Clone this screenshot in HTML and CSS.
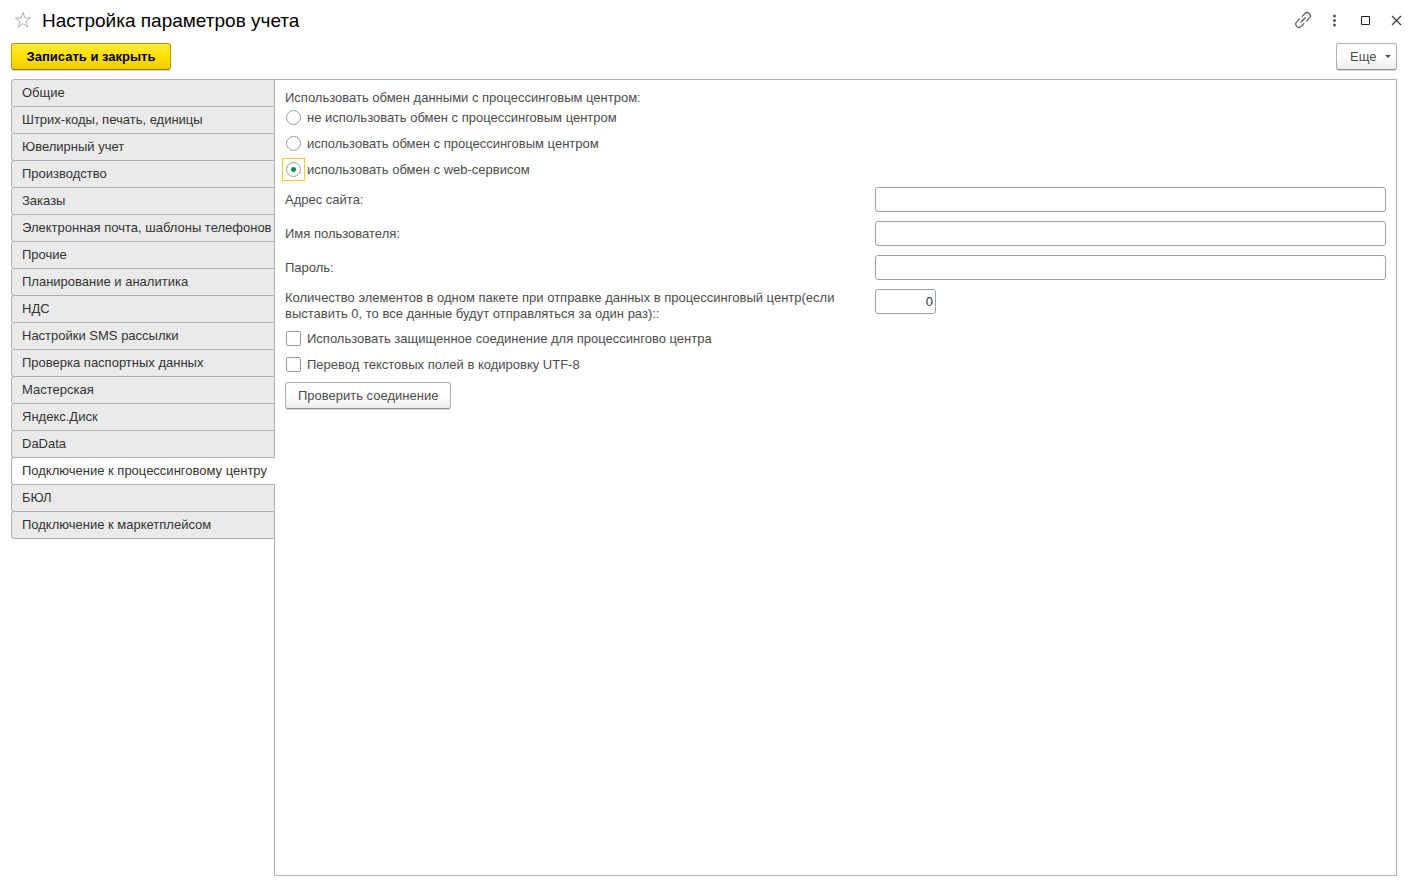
FILE: index.html
```html
<!DOCTYPE html>
<html lang="ru">
<head>
<meta charset="utf-8">
<title>Настройка параметров учета</title>
<link rel="stylesheet" href="styles.css">
</head>
<body>
<header class="titlebar">
  <button class="icon-button" type="button" aria-label="Добавить в избранное">
    <svg width="18" height="18" viewBox="0 0 18 18" fill="none" stroke="#a9b0b8"><path d="M9 1.500 11 6.900H16.700L12.100 10.400 13.800 16 9 12.600 4.200 16 5.900 10.400 1.300 6.900H7Z"/></svg>
  </button>
  <h1 class="title">Настройка параметров учета</h1>
  <div class="window-tools">
    <button class="icon-button" type="button" aria-label="Получить ссылку">
      <svg width="18" height="18" viewBox="0 0 18 18" fill="none" stroke="#555" stroke-width="1.200"><path transform="rotate(-45 9 9)" d="M7.500 5.800H3.200a3.200 3.200 0 0 0 0 6.400H7.500M10.500 5.800H14.800a3.200 3.200 0 0 1 0 6.400H10.500M5.500 9H12.500"/></svg>
    </button>
    <button class="icon-button" type="button" aria-label="Меню">
      <svg width="18" height="18" viewBox="0 0 18 18" fill="#555"><circle cx="9.500" cy="5" r="1.500"/><circle cx="9.500" cy="9.500" r="1.500"/><circle cx="9.500" cy="14" r="1.500"/></svg>
    </button>
    <button class="icon-button" type="button" aria-label="Развернуть">
      <svg width="18" height="18" viewBox="0 0 18 18" fill="none" stroke="#222"><path d="M5.500 5.500H13.500V13.500H5.500Z"/></svg>
    </button>
    <button class="icon-button" type="button" aria-label="Закрыть">
      <svg width="18" height="18" viewBox="0 0 18 18" fill="none" stroke="#333" stroke-width="1.100"><path d="M5 5 14 14M14 5 5 14"/></svg>
    </button>
  </div>
</header>

<div class="toolbar">
  <button class="button button-primary" type="button">Записать и закрыть</button>
  <button class="button button-more" type="button">Еще <span class="caret"></span></button>
</div>

<main class="workspace">
  <nav class="tabs" role="tablist" aria-label="Разделы">
    <button class="tab" type="button" role="tab">Общие</button>
    <button class="tab" type="button" role="tab">Штрих-коды, печать, единицы</button>
    <button class="tab" type="button" role="tab">Ювелирный учет</button>
    <button class="tab" type="button" role="tab">Производство</button>
    <button class="tab" type="button" role="tab">Заказы</button>
    <button class="tab" type="button" role="tab">Электронная почта, шаблоны телефонов</button>
    <button class="tab" type="button" role="tab">Прочие</button>
    <button class="tab" type="button" role="tab">Планирование и аналитика</button>
    <button class="tab" type="button" role="tab">НДС</button>
    <button class="tab" type="button" role="tab">Настройки SMS рассылки</button>
    <button class="tab" type="button" role="tab">Проверка паспортных данных</button>
    <button class="tab" type="button" role="tab">Мастерская</button>
    <button class="tab" type="button" role="tab">Яндекс.Диск</button>
    <button class="tab" type="button" role="tab">DaData</button>
    <button class="tab tab-active" type="button" role="tab" aria-selected="true">Подключение к процессинговому центру</button>
    <button class="tab" type="button" role="tab">БЮЛ</button>
    <button class="tab" type="button" role="tab">Подключение к маркетплейсом</button>
  </nav>

  <form class="panel">
    <div class="choices" role="radiogroup" aria-labelledby="exchange-title">
      <div class="choices-title" id="exchange-title">Использовать обмен данными с процессинговым центром:</div>
      <label class="choice"><span class="mark"><input class="radio" type="radio" name="exchange"></span>не использовать обмен с процессинговым центром</label>
      <label class="choice"><span class="mark"><input class="radio" type="radio" name="exchange"></span>использовать обмен с процессинговым центром</label>
      <label class="choice"><span class="mark mark-current"><input class="radio" type="radio" name="exchange" checked></span>использовать обмен с web-сервисом</label>
    </div>

    <div class="fields">
      <label class="label" for="site">Адрес сайта:</label>
      <input class="input" id="site" type="text">
      <label class="label" for="user">Имя пользователя:</label>
      <input class="input" id="user" type="text">
      <label class="label" for="password">Пароль:</label>
      <input class="input" id="password" type="password">
      <label class="label label-long" for="count">Количество элементов в одном пакете при отправке данных в процессинговый центр(если выставить 0, то все данные будут отправляться за один раз)::</label>
      <input class="input input-number" id="count" type="text" inputmode="numeric" value="0">
    </div>

    <label class="choice"><span class="mark"><input class="checkbox" type="checkbox"></span>Использовать защищенное соединение для процессингово центра</label>
    <label class="choice"><span class="mark"><input class="checkbox" type="checkbox"></span>Перевод текстовых полей в кодировку UTF-8</label>
    <button class="button button-check" type="button">Проверить соединение</button>
  </form>
</main>
</body>
</html>
```
FILE: styles.css
```css
* {
  box-sizing: border-box;
}

body {
  display: flex;
  flex-direction: column;
  min-height: 100vh;
  margin: 0;
  padding: 0 19px 12px 11px;
  background: #fff;
  color: #4c4c4c;
  font: 13px/16px "Liberation Sans", Arial, sans-serif;
}

button,
input {
  margin: 0;
  font: inherit;
}

.titlebar {
  display: flex;
  align-items: center;
  height: 40px;
  padding-left: 3px;
  margin-right: -8px;
}

.icon-button {
  display: block;
  padding: 0;
  border: 0;
  background: none;
}

.icon-button svg {
  display: block;
}

.title {
  margin: 0 0 0 10px;
  padding-top: 2px;
  color: #000;
  font-size: 19px;
  font-weight: 400;
  line-height: 24px;
}

.window-tools {
  display: flex;
  gap: 13px;
  margin-left: auto;
}

.toolbar {
  display: flex;
  justify-content: space-between;
  padding: 3px 0 9px;
}

.button {
  height: 27px;
  padding: 0 12px;
  border: 1px solid #b0b0b0;
  border-bottom-color: #8f8f8f;
  border-radius: 3px;
  background: linear-gradient(#fff 50%, #ececec);
  box-shadow: 0 1px 0 #d8d8d8;
  color: #4c4c4c;
}

.button-primary {
  min-width: 160px;
  border-color: #b39b00;
  border-bottom-color: #8f7c00;
  background: linear-gradient(#ffea3d, #ffe000 50%, #f0cf00);
  color: #000;
  font-weight: 700;
}

.button-more {
  display: flex;
  align-items: center;
  justify-content: space-between;
  min-width: 61px;
  padding: 0 5px 0 13px;
}

.caret {
  border: 3px solid transparent;
  border-top-color: #4c4c4c;
  border-bottom: 0;
}

.workspace {
  display: flex;
  flex: 1;
}

.tabs {
  z-index: 1;
  display: flex;
  flex: none;
  flex-direction: column;
  align-self: flex-start;
  width: 264px;
  margin-right: -1px;
}

.tab {
  height: 28px;
  margin-bottom: -1px;
  padding: 0 0 1px 10px;
  border: 1px solid #b0b0b0;
  border-radius: 3px 0 0 3px;
  background: #eaeaea;
  color: #333;
  text-align: left;
  white-space: nowrap;
}

.tab-active {
  border-right-color: #fff;
  background: #fff;
}

.panel {
  display: flex;
  flex: 1;
  flex-direction: column;
  gap: 8px;
  min-width: 0;
  padding: 10px;
  border: 1px solid #b0b0b0;
}

.choices {
  display: flex;
  flex-direction: column;
  gap: 8px;
}

.choices-title {
  margin-bottom: -5px;
}

.choice {
  display: flex;
  align-items: flex-start;
  gap: 6px;
  height: 18px;
  padding: 1px 0 0 1px;
}

.mark {
  display: flex;
}

.mark-current {
  outline: 1px solid #f7c927;
  outline-offset: 3px;
}

.radio,
.checkbox {
  width: 15px;
  height: 15px;
  border: 1px solid #999;
  background: #fff;
  appearance: none;
}

.radio {
  border-radius: 50%;
}

.radio:checked {
  background: radial-gradient(circle, #009646 2px, #fff 3px);
}

.checkbox {
  border-radius: 2px;
}

.fields {
  display: grid;
  grid-template-columns: 580fr 511fr;
  gap: 9px 10px;
  align-items: start;
}

.label {
  padding: 5px 0 4px;
}

.label-long {
  padding: 1px 0 0;
}

.input {
  width: 100%;
  height: 25px;
  padding: 0 2px;
  border: 1px solid #a0a0a0;
  border-radius: 3px;
  background: #fff;
  color: #333;
}

.input-number {
  width: 61px;
  text-align: right;
}

.button-check {
  align-self: flex-start;
  min-width: 166px;
}
```
